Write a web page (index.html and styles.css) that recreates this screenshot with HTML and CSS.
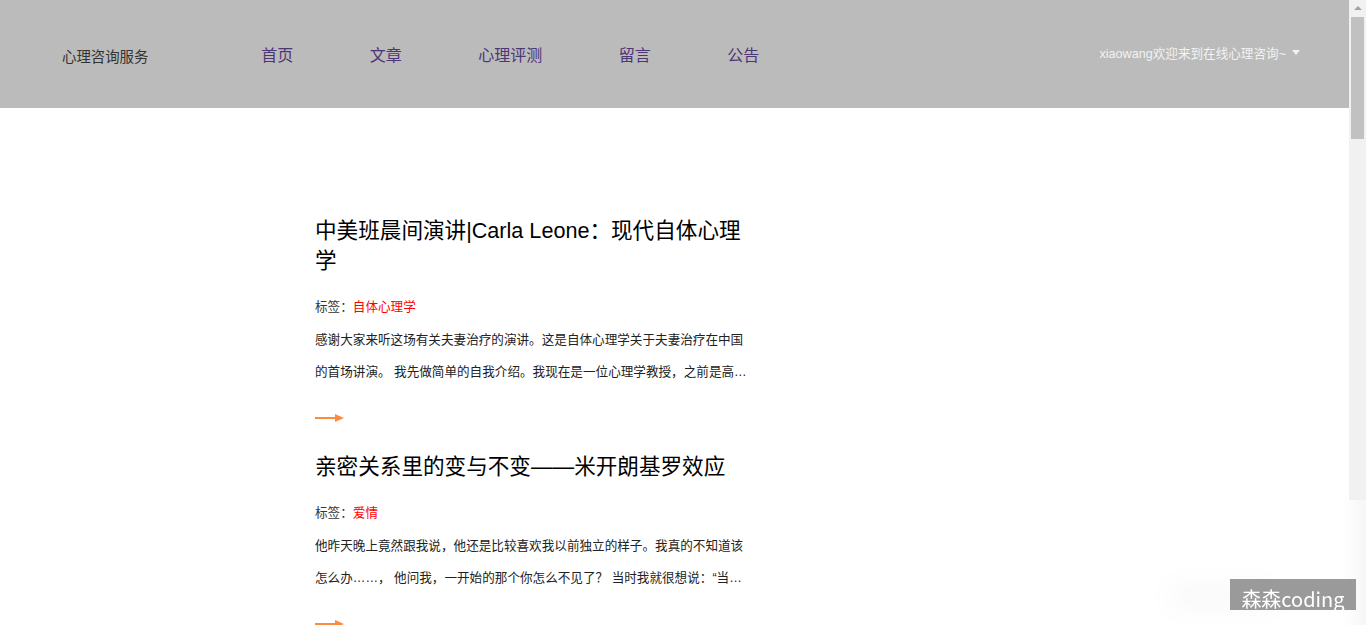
FILE: index.html
```html
<!DOCTYPE html>
<html lang="zh-CN">
<head>
<meta charset="utf-8">
<title>心理咨询服务</title>
<link rel="stylesheet" href="styles.css">
</head>
<body>
<div class="page">
  <header class="topbar">
    <div class="brand">心理咨询服务</div>
    <nav class="nav">
      <a class="nav-link" href="#">首页</a>
      <a class="nav-link" href="#">文章</a>
      <a class="nav-link" href="#">心理评测</a>
      <a class="nav-link" href="#">留言</a>
      <a class="nav-link" href="#">公告</a>
    </nav>
    <div class="user">xiaowang欢迎来到在线心理咨询~<span class="caret"></span></div>
  </header>

  <main class="list">
    <article class="post">
      <h2 class="post-title">中美班晨间演讲|Carla Leone：现代自体心理学</h2>
      <p class="post-tag">标签：<span class="tag">自体心理学</span></p>
      <p class="post-excerpt">感谢大家来听这场有关夫妻治疗的演讲。这是自体心理学关于夫妻治疗在中国的首场讲演。 我先做简单的自我介绍。我现在是一位心理学教授，之前是高中老师，后来在芝加哥自体心理学研究所接受了系统的训练。</p>
      <a class="post-more" href="#"><svg width="30" height="12" viewBox="0 0 30 12"><line x1="0" y1="6" x2="22" y2="6" stroke="#ff8a3d" stroke-width="2"/><polygon points="20,2 29,6 20,10" fill="#ff8a3d"/></svg></a>
    </article>

    <article class="post">
      <h2 class="post-title">亲密关系里的变与不变——米开朗基罗效应</h2>
      <p class="post-tag">标签：<span class="tag">爱情</span></p>
      <p class="post-excerpt">他昨天晚上竟然跟我说，他还是比较喜欢我以前独立的样子。我真的不知道该怎么办……， 他问我，一开始的那个你怎么不见了？ 当时我就很想说：“当初不是你希望我多依赖你一点的吗？”</p>
      <a class="post-more" href="#"><svg width="30" height="12" viewBox="0 0 30 12"><line x1="0" y1="6" x2="22" y2="6" stroke="#ff8a3d" stroke-width="2"/><polygon points="20,2 29,6 20,10" fill="#ff8a3d"/></svg></a>
    </article>

    <article class="post">
      <h2 class="post-title">如何与焦虑情绪和平相处</h2>
      <p class="post-tag">标签：<span class="tag">情绪管理</span></p>
      <p class="post-excerpt">焦虑是每个人都会经历的情绪，它并不是我们的敌人。适度的焦虑能够帮助我们做好准备，应对生活中的挑战。但当焦虑过度时，我们就需要学会觉察它、接纳它。</p>
      <a class="post-more" href="#"><svg width="30" height="12" viewBox="0 0 30 12"><line x1="0" y1="6" x2="22" y2="6" stroke="#ff8a3d" stroke-width="2"/><polygon points="20,2 29,6 20,10" fill="#ff8a3d"/></svg></a>
    </article>
  </main>
</div>

<aside class="rail" aria-hidden="true">
  <div class="rail-btn rail-up"></div>
  <div class="rail-track">
    <div class="rail-thumb"></div>
  </div>
  <div class="rail-btn rail-down"></div>
</aside>

<div class="corner-fade"></div>
<div class="watermark">森森coding</div>
</body>
</html>
```

FILE: styles.css
```css
html, body {
  margin: 0;
  padding: 0;
  height: 100%;
  overflow: hidden;
  background: #fff;
}

body {
  display: flex;
  font-family: "Liberation Sans", "Noto Sans CJK SC", sans-serif;
  color: #333;
}

.page {
  flex: 1;
  min-width: 0;
  height: 100vh;
  overflow: hidden;
}

/* scrollbar rail */
.rail {
  width: 17px;
  flex: none;
  height: 100vh;
  background: #f1f1f1;
  display: flex;
  flex-direction: column;
}

.rail-btn {
  height: 17px;
  flex: none;
  display: flex;
  align-items: center;
  justify-content: center;
}

.rail-up::before {
  content: "";
  border-left: 4px solid transparent;
  border-right: 4px solid transparent;
  border-bottom: 4px solid #a3a3a3;
  margin-top: -2px;
}

.rail-down::before {
  content: "";
  border-left: 4px solid transparent;
  border-right: 4px solid transparent;
  border-top: 4px solid #a3a3a3;
}

.rail-track {
  flex: 1;
}

.rail-thumb {
  height: 122px;
  margin: 0 2px;
  background: #c1c1c1;
}

/* header */
.topbar {
  height: 108px;
  background: #bbbbbb;
  display: flex;
  align-items: center;
  padding-left: 62px;
  padding-right: 49px;
}

.brand {
  width: 161px;
  font-size: 14.4px;
  color: #333;
  padding-top: 3px;
}

.nav {
  display: flex;
}

.nav-link {
  margin: 0 38.25px;
  font-size: 16px;
  color: #4d3675;
  text-decoration: none;
}

.user {
  margin-left: auto;
  font-size: 12.6px;
  color: #f2f2f2;
  display: flex;
  align-items: center;
  padding-bottom: 4px;
}

.caret {
  width: 0;
  height: 0;
  margin-left: 6px;
  border-left: 4.5px solid transparent;
  border-right: 4.5px solid transparent;
  border-top: 5px solid #f2f2f2;
}

/* article list */
.list {
  padding: 108px 0 0 315px;
}

.post {
  width: 432px;
  margin-bottom: 24px;
}

.post-title {
  margin: 0;
  font-size: 21.6px;
  line-height: 30px;
  font-weight: normal;
  color: #000;
}

.post-tag {
  margin: 21px 0 0;
  font-size: 12.6px;
  line-height: 20px;
  color: #333;
}

.tag {
  color: #ff0000;
}

.post-excerpt {
  margin: 7px 0 0;
  font-size: 12.6px;
  line-height: 32px;
  color: #222;
  display: -webkit-box;
  -webkit-box-orient: vertical;
  -webkit-line-clamp: 2;
  overflow: hidden;
}

.post-more {
  display: flex;
  align-items: center;
  height: 20px;
  margin-top: 20px;
  width: 30px;
}

.post-more svg {
  display: block;
}

/* overlays */
.corner-fade {
  position: fixed;
  right: 0;
  bottom: 0;
  width: 40px;
  height: 125px;
  background: linear-gradient(to right, rgba(255,255,255,0) 0%, #fff 40%, #f6f6f6 100%);
}

.watermark {
  position: fixed;
  right: 10px;
  bottom: 15px;
  width: 126px;
  height: 31px;
  box-sizing: border-box;
  padding-top: 4px;
  overflow: hidden;
  background: #9a9a9a;
  color: #fff;
  font-family: "Noto Sans CJK SC", sans-serif;
  font-size: 20px;
  line-height: 31px;
  text-align: center;
  box-shadow: -70px 2px 30px -8px rgba(0, 0, 0, 0.05);
}
```
